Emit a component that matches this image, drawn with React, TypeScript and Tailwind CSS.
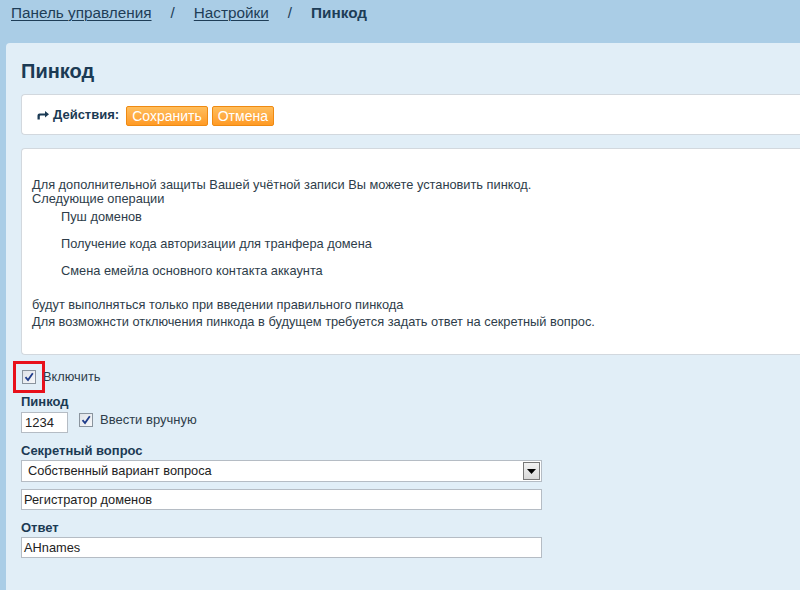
import React from "react";

const Check = () => (
  <span className="flex h-[14px] w-[14px] items-center justify-center border border-[#8a949e] bg-gradient-to-br from-[#dfe3e8] to-[#f7f8fa]">
    <svg width="10" height="10" viewBox="0 0 10 10">
      <path d="M1.5 5.2 L4 8 L8.8 1.2" fill="none" stroke="#1f3c8a" strokeWidth="1.8" />
    </svg>
  </span>
);

export default function App() {
  return (
    <div className="h-[590px] w-[800px] overflow-hidden bg-[#aacde6] font-['Liberation_Sans',Arial,sans-serif] text-[#2b3b48]">
      {/* Breadcrumbs */}
      <div className="flex h-[43px] items-start pl-[11px] pt-[2px] text-[15.3px] text-[#1e3d57]">
        <a className="underline decoration-1 underline-offset-2">Панель управления</a>
        <span className="px-[19px]">/</span>
        <a className="underline decoration-1 underline-offset-2">Настройки</a>
        <span className="px-[19px]">/</span>
        <span className="font-bold">Пинкод</span>
      </div>

      {/* Panel */}
      <div className="ml-[6px] h-[547px] rounded-tl-[4px] bg-[#e1eef7] pl-[15px]">
        <h1 className="pt-[16px] text-[20px] font-bold leading-[24px] text-[#1b3a54]">Пинкод</h1>

        <div className="mt-[11px] flex h-[41px] items-center rounded-l-[4px] border border-r-0 border-[#d2d8de] bg-white pl-[14px] text-[13px]">
          <svg width="14" height="10" viewBox="0 0 14 10" className="mr-[3px]">
            <path d="M1.5 9.5 V5.5 Q1.5 3.5 3.5 3.5 H9 V1 L13 4.2 L9 7.4 V5.6 H4.5 Q3.8 5.6 3.8 6.3 V9.5 Z" fill="#1b3a54" />
          </svg>
          <span className="font-bold text-[#1b3a54]">Действия:</span>
          <button className="ml-[7px] mt-[2px] h-[20px] rounded-[2px] border border-[#ef8a12] bg-gradient-to-b from-[#ffbe5c] to-[#ff9a22] px-[5px] text-[14px] leading-[18px] text-white">
            Сохранить
          </button>
          <button className="ml-[4px] mt-[2px] h-[20px] rounded-[2px] border border-[#ef8a12] bg-gradient-to-b from-[#ffbe5c] to-[#ff9a22] px-[5px] text-[14px] leading-[18px] text-white">
            Отмена
          </button>
        </div>

        <div className="mt-[13px] h-[207px] rounded-l-[4px] border border-r-0 border-[#d2d8de] bg-white pl-[10px] pt-[29px] text-[12.8px] leading-[14px] text-[#2e3d4a]">
          <p>Для дополнительной защиты Вашей учётной записи Вы можете установить пинкод.</p>
          <p>Следующие операции</p>
          <ul className="pl-[29px]">
            <li className="mt-[4px]">Пуш доменов</li>
            <li className="mt-[13px]">Получение кода авторизации для транфера домена</li>
            <li className="mt-[13px]">Смена емейла основного контакта аккаунта</li>
          </ul>
          <p className="mt-[20px]">будут выполняться только при введении правильного пинкода</p>
          <p className="mt-[3px]">Для возможнсти отключения пинкода в будущем требуется задать ответ на секретный вопрос.</p>
        </div>

        {/* Enable */}
        <div className="mt-[6px] flex items-center">
          <div className="ml-[-8px] flex h-[32px] w-[32px] items-center justify-center border-[3px] border-[#e8101a]">
            <Check />
          </div>
          <span className="ml-[-2px] text-[12.8px] text-[#2e3d4a]">Включить</span>
        </div>

        <div className="mt-[1px] text-[13px] font-bold leading-[15px] text-[#1b3a54]">Пинкод</div>
        <div className="mt-[3px] flex items-start">
          <div className="flex h-[21px] w-[47px] items-center border border-[#b5bcc4] bg-white px-[3px] text-[13px] text-[#222]">1234</div>
          <span className="ml-[11px] mt-[1px]">
            <Check />
          </span>
          <span className="ml-[7px] text-[13px] leading-[16px] text-[#2e3d4a]">Ввести вручную</span>
        </div>

        <div className="mt-[10px] text-[13px] font-bold leading-[15px] text-[#1b3a54]">Секретный вопрос</div>
        <div className="mt-[2px] flex h-[22px] w-[521px] items-center border border-[#b5bcc4] bg-white text-[12.8px] text-[#222]">
          <span className="flex-1 pl-[6px]">Собственный вариант вопроса</span>
          <span className="mr-[1px] flex h-[18px] w-[17px] items-center justify-center border border-[#777] bg-gradient-to-b from-[#f2f2f2] to-[#d8d8d8]">
            <svg width="9" height="5" viewBox="0 0 9 5">
              <path d="M0 0 H9 L4.5 5 Z" fill="#000" />
            </svg>
          </span>
        </div>
        <div className="mt-[7px] flex h-[21px] w-[521px] items-center border border-[#b5bcc4] bg-white px-[2px] text-[12.8px] text-[#222]">
          Регистратор доменов
        </div>

        <div className="mt-[10px] text-[13px] font-bold leading-[15px] text-[#1b3a54]">Ответ</div>
        <div className="mt-[2px] flex h-[21px] w-[521px] items-center border border-[#b5bcc4] bg-white px-[2px] text-[12.8px] text-[#222]">
          AHnames
        </div>
      </div>
    </div>
  );
}
